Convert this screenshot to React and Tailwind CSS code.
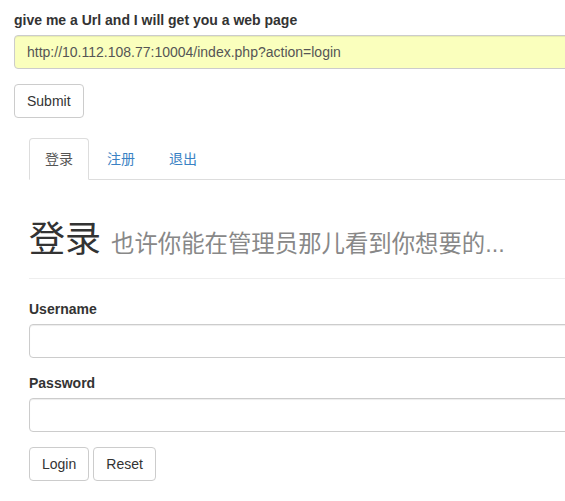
import React from "react";

const font = "font-['Helvetica_Neue',Helvetica,'Liberation_Sans',Arial,'Noto_Sans_CJK_SC',sans-serif]";

function Field({ label, type = "text" }) {
  return (
    <div className="mb-[15px]">
      <label className="block mb-[5px] font-bold text-[14px] leading-[20px] text-[#333]">{label}</label>
      <input
        type={type}
        className="block w-full h-[34px] px-3 py-1.5 border border-[#ccc] rounded-[4px] bg-white shadow-[inset_0_1px_1px_rgba(0,0,0,0.075)] outline-none"
      />
    </div>
  );
}

function Btn({ children }) {
  return (
    <button className="h-[34px] px-3 border border-[#ccc] rounded-[4px] bg-white text-[14px] leading-[20px] text-[#333]">
      {children}
    </button>
  );
}

export default function App() {
  return (
    <div className={`w-[565px] h-[501px] overflow-hidden bg-white text-[#333] text-[14px] leading-[20px] ${font}`}>
      <div className="w-[680px] pt-[10px] px-[14px]">
        {/* url form */}
        <div className="mb-[15px]">
          <label className="block mb-[5px] font-bold text-[#333]">give me a Url and I will get you a web page</label>
          <input
            readOnly
            value="http://10.112.108.77:10004/index.php?action=login"
            className="block w-full h-[34px] px-3 py-1.5 border border-[#ccc] rounded-[4px] bg-[#faffbd] text-[#555] shadow-[inset_0_1px_1px_rgba(0,0,0,0.075)] outline-none"
          />
        </div>
        <Btn>Submit</Btn>

        {/* login page */}
        <div className="mt-[20px] px-[15px]">
          <ul className="flex border-b border-[#ddd]">
            <li className="-mb-px mr-[2px]">
              <span className="block px-[15px] py-[10px] border border-[#ddd] border-b-transparent rounded-t-[4px] bg-white text-[#555]">登录</span>
            </li>
            <li className="-mb-px mr-[2px]">
              <span className="block px-[15px] py-[10px] border border-transparent text-[#3a82c4]">注册</span>
            </li>
            <li className="-mb-px mr-[2px]">
              <span className="block px-[15px] py-[10px] border border-transparent text-[#3a82c4]">退出</span>
            </li>
          </ul>

          <div className="mt-[40px] mb-[20px] pb-[9px] border-b border-[#eee]">
            <h1 className="mb-[9px] text-[36px] leading-[1.1] font-normal text-[#333]">
              登录 <small className="text-[65%] text-[#888]">也许你能在管理员那儿看到你想要的...</small>
            </h1>
          </div>

          <Field label="Username" />
          <Field label="Password" type="password" />
          <div className="flex gap-[4px]">
            <Btn>Login</Btn>
            <Btn>Reset</Btn>
          </div>
        </div>
      </div>
    </div>
  );
}
